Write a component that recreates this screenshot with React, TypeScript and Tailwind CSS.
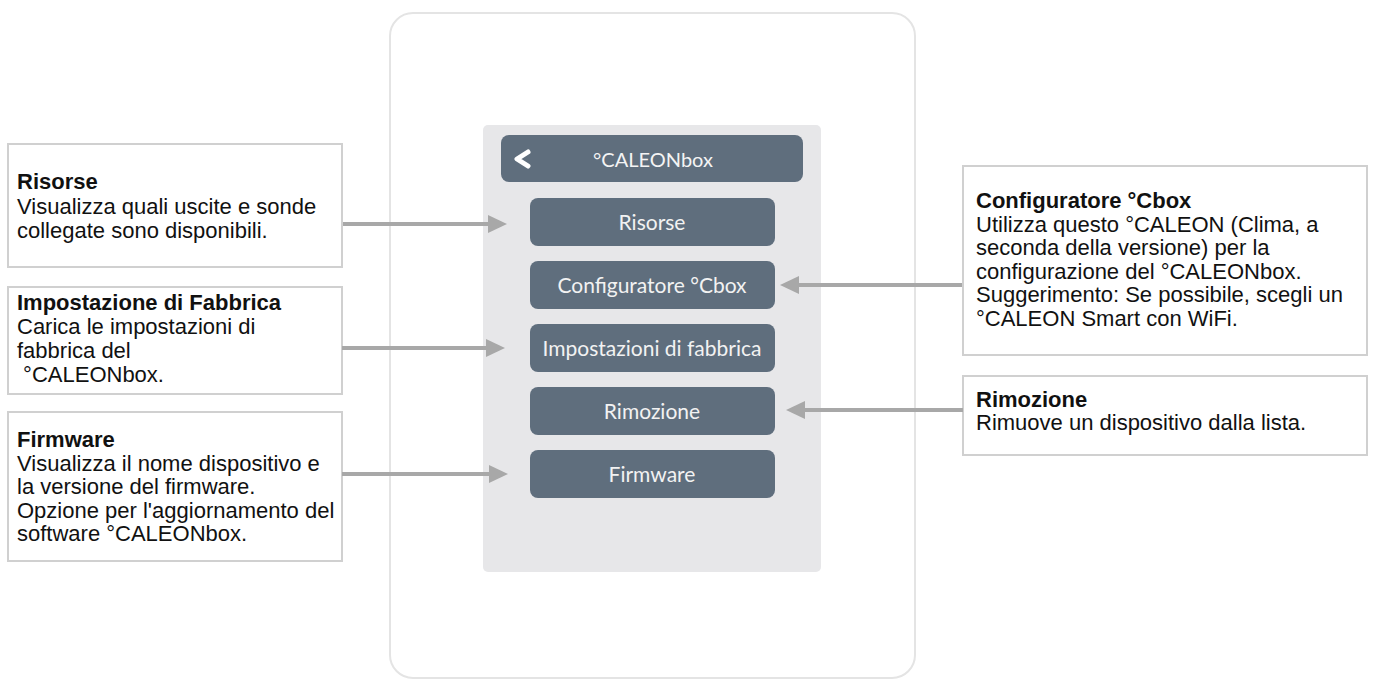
import React from 'react'

const menuItems = ['Risorse', 'Configuratore °Cbox', 'Impostazioni di fabbrica', 'Rimozione', 'Firmware']

type CalloutProps = {
  title: string
  lines: string[]
  className: string
}

function Callout({ title, lines, className }: CalloutProps) {
  return (
    <div className={`border-2 border-[#d0d0d0] bg-white text-[22px] text-[#111] whitespace-pre ${className}`}>
      <div className="font-bold">{title}</div>
      {lines.map((line, i) => (
        <div key={i}>{line}</div>
      ))}
    </div>
  )
}

function Arrows() {
  const color = '#a8a8a8'
  const arrows = [
    { x1: 343, x2: 488, y: 224, dir: 1 },
    { x1: 342, x2: 486, y: 348, dir: 1 },
    { x1: 342, x2: 489, y: 474, dir: 1 },
    { x1: 962, x2: 799, y: 285, dir: -1 },
    { x1: 963, x2: 805, y: 410, dir: -1 },
  ]

  return (
    <svg className="absolute inset-0 pointer-events-none" width="1373" height="681" viewBox="0 0 1373 681">
      {arrows.map((a, i) => {
        const base = a.x2
        const tip = a.x2 + a.dir * 19
        return (
          <g key={i}>
            <line x1={a.x1} y1={a.y} x2={a.x2} y2={a.y} stroke={color} strokeWidth={4} />
            <polygon points={`${base},${a.y - 9} ${tip},${a.y} ${base},${a.y + 9}`} fill={color} />
          </g>
        )
      })}
    </svg>
  )
}

export default function App() {
  return (
    <div className="relative w-[1373px] h-[681px] overflow-hidden bg-white font-['Liberation_Sans',Arial,sans-serif]">
      <div className="flex items-start">
        {/* left callouts */}
        <div className="ml-[7px] w-[336px] flex flex-col">
          <Callout
            title="Risorse"
            lines={['Visualizza quali uscite e sonde', 'collegate sono disponibili.']}
            className="mt-[143px] h-[125px] pl-[8px] pt-[25px] leading-[24.5px]"
          />
          <Callout
            title="Impostazione di Fabbrica"
            lines={['Carica le impostazioni di', 'fabbrica del', ' °CALEONbox.']}
            className="mt-[18px] h-[109px] pl-[8px] pt-[3px] leading-[24px]"
          />
          <Callout
            title="Firmware"
            lines={[
              'Visualizza il nome dispositivo e',
              'la versione del firmware.',
              "Opzione per l'aggiornamento del",
              'software °CALEONbox.',
            ]}
            className="mt-[16px] h-[151px] pl-[8px] pt-[15px] leading-[23.5px]"
          />
        </div>

        {/* device */}
        <div className="ml-[46px] mt-[12px] w-[527px] h-[667px] rounded-[24px] border-2 border-[#e4e4e4] bg-white">
          <div className="ml-[92px] mt-[111px] w-[338px] h-[447px] rounded-[5px] bg-[#e7e7e9] px-[18px] pt-[10px] font-['Lato',sans-serif]">
            <div className="relative flex h-[47px] items-center justify-center rounded-[8px] bg-[#5f6e7d] text-[20px] text-[#f4f4f4]">
              <svg className="absolute left-[11px] top-[13px]" width="22" height="22" viewBox="0 0 22 22">
                <path d="M16 4 L5 11 L16 18" fill="none" stroke="#ffffff" strokeWidth={5} strokeLinecap="round" strokeLinejoin="round" />
              </svg>
              <span className="ml-[2px]">°CALEONbox</span>
            </div>
            <div className="mt-[16px] flex flex-col items-center gap-[15px]">
              {menuItems.map((label) => (
                <div
                  key={label}
                  className="flex h-[48px] w-[245px] items-center justify-center rounded-[8px] bg-[#5f6e7d] text-[21px] text-[#f2f2f2] whitespace-nowrap"
                >
                  {label}
                </div>
              ))}
            </div>
          </div>
        </div>

        {/* right callouts */}
        <div className="ml-[46px] w-[406px] flex flex-col">
          <Callout
            title="Configuratore °Cbox"
            lines={[
              'Utilizza questo °CALEON (Clima, a',
              'seconda della versione) per la',
              'configurazione del °CALEONbox.',
              'Suggerimento: Se possibile, scegli un',
              '°CALEON Smart con WiFi.',
            ]}
            className="mt-[165px] h-[191px] pl-[12px] pt-[22px] leading-[23.5px]"
          />
          <Callout
            title="Rimozione"
            lines={['Rimuove un dispositivo dalla lista.']}
            className="mt-[19px] h-[81px] pl-[12px] pt-[11px] leading-[23px]"
          />
        </div>
      </div>

      <Arrows />
    </div>
  )
}
